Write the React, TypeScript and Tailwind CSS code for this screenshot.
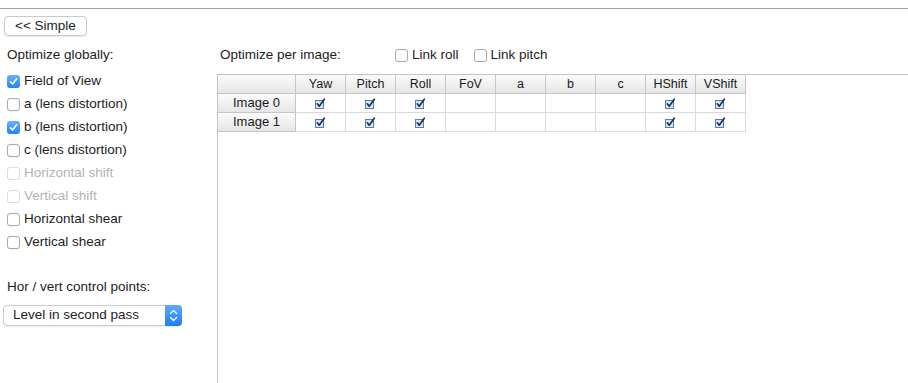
import React from 'react'

const globals = [
  { label: 'Field of View', checked: true },
  { label: 'a (lens distortion)' },
  { label: 'b (lens distortion)', checked: true },
  { label: 'c (lens distortion)' },
  { label: 'Horizontal shift', disabled: true },
  { label: 'Vertical shift', disabled: true },
  { label: 'Horizontal shear' },
  { label: 'Vertical shear' },
]

const columns = ['Yaw', 'Pitch', 'Roll', 'FoV', 'a', 'b', 'c', 'HShift', 'VShift']
const rows = [
  { name: 'Image 0', on: ['Yaw', 'Pitch', 'Roll', 'HShift', 'VShift'] },
  { name: 'Image 1', on: ['Yaw', 'Pitch', 'Roll', 'HShift', 'VShift'] },
]

function MacCheckbox({ checked, disabled }: { checked?: boolean; disabled?: boolean }) {
  if (checked) {
    return (
      <span className="flex h-[13px] w-[13px] shrink-0 items-center justify-center rounded-[3px] bg-linear-to-b from-[#68b1fa] to-[#1a84f6]">
        <svg width="9" height="9" viewBox="0 0 9 9" fill="none">
          <path d="M1.5 4.8 L3.6 7 L7.6 1.8" stroke="white" strokeWidth="1.6" strokeLinecap="round" strokeLinejoin="round" />
        </svg>
      </span>
    )
  }
  return (
    <span
      className={
        disabled
          ? 'h-[13px] w-[13px] shrink-0 rounded-[3px] border border-[#dcdcdc] bg-white'
          : 'h-[13px] w-[13px] shrink-0 rounded-[3px] border border-[#a9a9a9] bg-white shadow-[0_0.5px_0.5px_rgba(0,0,0,0.08)]'
      }
    />
  )
}

function CellCheck() {
  return (
    <svg width="11" height="11" viewBox="0 0 11 11" fill="none">
      <rect x="0.5" y="2.5" width="8" height="8" fill="#d4e3f6" stroke="#5b7eab" />
      <path d="M2.3 5.8 L4.2 8.2 L9.3 1.2" stroke="#1b2d4f" strokeWidth="1.6" strokeLinecap="round" strokeLinejoin="round" />
    </svg>
  )
}

export default function App() {
  return (
    <div className="h-[383px] w-[908px] overflow-hidden bg-white font-['Liberation_Sans',Arial,sans-serif] text-[13.5px] text-[#1d1d1d]">
      <div className="pt-2">
        <div className="h-px bg-[#a3a3a3]" />
      </div>

      <div className="pl-1 pt-[7px]">
        <button className="flex h-5 w-[83px] items-center justify-center rounded-[4px] border border-[#c9c9c9] bg-white text-[13.5px] text-[#1d1d1d] shadow-[0_0.5px_1px_rgba(0,0,0,0.08)]">
          &lt;&lt; Simple
        </button>
      </div>

      <div className="flex h-[348px]">
        {/* Left: global parameters */}
        <div className="w-[217px] shrink-0">
          <div className="pl-[7px] pt-[11px] leading-4">Optimize globally:</div>
          <div className="mt-[7px] flex flex-col">
            {globals.map((g) => (
              <div key={g.label} className="flex h-[23px] items-center gap-[4px] pl-[7px]">
                <MacCheckbox checked={g.checked} disabled={g.disabled} />
                <span className={g.disabled ? 'text-[#b3b3b3]' : ''}>{g.label}</span>
              </div>
            ))}
          </div>

          <div className="pl-[7px] pt-[25px] leading-4">Hor / vert control points:</div>
          <div className="pl-[3px] pt-[10px]">
            <div className="flex h-[21px] w-[179px] items-stretch rounded-[4px] border border-[#cdcdcd] bg-white shadow-[0_0.5px_1px_rgba(0,0,0,0.08)]">
              <span className="flex flex-1 items-center pl-[9px]">Level in second pass</span>
              <span className="-my-px -mr-px flex w-[17px] items-center justify-center rounded-r-[4px] bg-linear-to-b from-[#5fa9fb] to-[#1a7ef5]">
                <svg width="9" height="13" viewBox="0 0 9 13" fill="none">
                  <path d="M1.5 4.5 L4.5 1.5 L7.5 4.5" stroke="white" strokeWidth="1.3" strokeLinecap="round" strokeLinejoin="round" />
                  <path d="M1.5 8.5 L4.5 11.5 L7.5 8.5" stroke="white" strokeWidth="1.3" strokeLinecap="round" strokeLinejoin="round" />
                </svg>
              </span>
            </div>
          </div>
        </div>

        {/* Right: per image parameters */}
        <div className="flex flex-1 flex-col">
          <div className="mt-[11px] flex h-4 items-center pl-[3px] leading-4">
            <span className="w-[175px]">Optimize per image:</span>
            <label className="flex items-center gap-[4px]">
              <MacCheckbox />
              <span>Link roll</span>
            </label>
            <label className="ml-[15px] flex items-center gap-[4px]">
              <MacCheckbox />
              <span>Link pitch</span>
            </label>
          </div>

          <div className="mt-[11px] flex-1 border-l border-t border-[#c4c4c4]">
            <div className="grid w-fit grid-cols-[78px_repeat(9,50px)] text-[12.5px] text-[#1a1a1a]">
              <div className="h-[19px] border-b border-r border-[#c6c6c6] bg-linear-to-b from-[#fbfbfb] to-[#e6e6e6]" />
              {columns.map((c) => (
                <div
                  key={c}
                  className="flex h-[19px] items-center justify-center border-b border-r border-[#c6c6c6] bg-linear-to-b from-[#fbfbfb] to-[#e6e6e6]"
                >
                  {c}
                </div>
              ))}
              {rows.map((r) => (
                <React.Fragment key={r.name}>
                  <div className="flex h-[19px] items-center justify-center border-b border-r border-[#c6c6c6] bg-linear-to-b from-[#fbfbfb] to-[#e6e6e6] text-[13px]">
                    {r.name}
                  </div>
                  {columns.map((c) => (
                    <div key={c} className="flex h-[19px] items-center justify-center border-b border-r border-[#dadada] bg-white">
                      {r.on.includes(c) ? <CellCheck /> : null}
                    </div>
                  ))}
                </React.Fragment>
              ))}
            </div>
          </div>
        </div>
      </div>
    </div>
  )
}
